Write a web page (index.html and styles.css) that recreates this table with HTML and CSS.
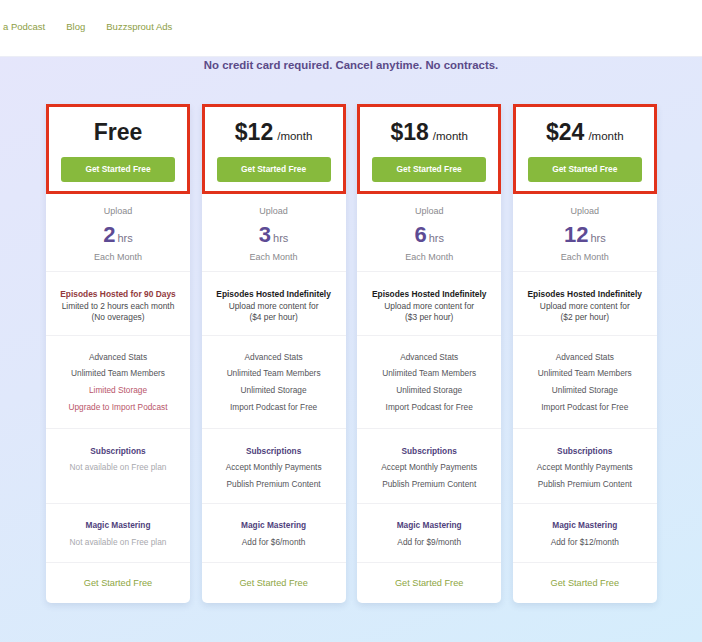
FILE: index.html
```html
<!DOCTYPE html>
<html>
<head>
<meta charset="utf-8">
<link rel="stylesheet" href="styles.css">
</head>
<body>
<header class="nav">
  <a class="nav-link">a Podcast</a>
  <a class="nav-link">Blog</a>
  <a class="nav-link">Buzzsprout Ads</a>
</header>
<main class="page">
  <p class="tagline">No credit card required. Cancel anytime. No contracts.</p>
  <div class="plans">
    <div class="card">
      <div class="top">
        <div class="price"><span class="amount">Free</span></div>
        <div class="btn">Get Started Free</div>
      </div>
      <div class="sec upload">
        <div class="label">Upload</div>
        <div class="hours"><span class="num">2</span><span class="unit">hrs</span></div>
        <div class="label each">Each Month</div>
      </div>
      <div class="sec episodes">
        <div class="ep-title warn">Episodes Hosted for 90 Days</div>
        <div class="ep-line">Limited to 2 hours each month</div>
        <div class="ep-line">(No overages)</div>
      </div>
      <div class="sec features">
        <div class="item">Advanced Stats</div>
        <div class="item">Unlimited Team Members</div>
        <div class="item limit">Limited Storage</div>
        <div class="item limit">Upgrade to Import Podcast</div>
      </div>
      <div class="sec subs">
        <div class="item title">Subscriptions</div>
        <div class="item muted">Not available on Free plan</div>
      </div>
      <div class="sec magic">
        <div class="item title">Magic Mastering</div>
        <div class="item muted">Not available on Free plan</div>
      </div>
      <div class="cta">Get Started Free</div>
    </div>

    <div class="card">
      <div class="top">
        <div class="price"><span class="amount">$12</span><span class="per">/month</span></div>
        <div class="btn">Get Started Free</div>
      </div>
      <div class="sec upload">
        <div class="label">Upload</div>
        <div class="hours"><span class="num">3</span><span class="unit">hrs</span></div>
        <div class="label each">Each Month</div>
      </div>
      <div class="sec episodes">
        <div class="ep-title">Episodes Hosted Indefinitely</div>
        <div class="ep-line">Upload more content for</div>
        <div class="ep-line">($4 per hour)</div>
      </div>
      <div class="sec features">
        <div class="item">Advanced Stats</div>
        <div class="item">Unlimited Team Members</div>
        <div class="item">Unlimited Storage</div>
        <div class="item">Import Podcast for Free</div>
      </div>
      <div class="sec subs">
        <div class="item title">Subscriptions</div>
        <div class="item">Accept Monthly Payments</div>
        <div class="item">Publish Premium Content</div>
      </div>
      <div class="sec magic">
        <div class="item title">Magic Mastering</div>
        <div class="item">Add for $6/month</div>
      </div>
      <div class="cta">Get Started Free</div>
    </div>

    <div class="card">
      <div class="top">
        <div class="price"><span class="amount">$18</span><span class="per">/month</span></div>
        <div class="btn">Get Started Free</div>
      </div>
      <div class="sec upload">
        <div class="label">Upload</div>
        <div class="hours"><span class="num">6</span><span class="unit">hrs</span></div>
        <div class="label each">Each Month</div>
      </div>
      <div class="sec episodes">
        <div class="ep-title">Episodes Hosted Indefinitely</div>
        <div class="ep-line">Upload more content for</div>
        <div class="ep-line">($3 per hour)</div>
      </div>
      <div class="sec features">
        <div class="item">Advanced Stats</div>
        <div class="item">Unlimited Team Members</div>
        <div class="item">Unlimited Storage</div>
        <div class="item">Import Podcast for Free</div>
      </div>
      <div class="sec subs">
        <div class="item title">Subscriptions</div>
        <div class="item">Accept Monthly Payments</div>
        <div class="item">Publish Premium Content</div>
      </div>
      <div class="sec magic">
        <div class="item title">Magic Mastering</div>
        <div class="item">Add for $9/month</div>
      </div>
      <div class="cta">Get Started Free</div>
    </div>

    <div class="card">
      <div class="top">
        <div class="price"><span class="amount">$24</span><span class="per">/month</span></div>
        <div class="btn">Get Started Free</div>
      </div>
      <div class="sec upload">
        <div class="label">Upload</div>
        <div class="hours"><span class="num">12</span><span class="unit">hrs</span></div>
        <div class="label each">Each Month</div>
      </div>
      <div class="sec episodes">
        <div class="ep-title">Episodes Hosted Indefinitely</div>
        <div class="ep-line">Upload more content for</div>
        <div class="ep-line">($2 per hour)</div>
      </div>
      <div class="sec features">
        <div class="item">Advanced Stats</div>
        <div class="item">Unlimited Team Members</div>
        <div class="item">Unlimited Storage</div>
        <div class="item">Import Podcast for Free</div>
      </div>
      <div class="sec subs">
        <div class="item title">Subscriptions</div>
        <div class="item">Accept Monthly Payments</div>
        <div class="item">Publish Premium Content</div>
      </div>
      <div class="sec magic">
        <div class="item title">Magic Mastering</div>
        <div class="item">Add for $12/month</div>
      </div>
      <div class="cta">Get Started Free</div>
    </div>
  </div>
</main>
</body>
</html>
```

FILE: styles.css
```css
* { box-sizing: border-box; }
html, body { margin: 0; padding: 0; }
body {
  font-family: "Liberation Sans", Arial, sans-serif;
  width: 702px;
  height: 642px;
  overflow: hidden;
  background: linear-gradient(160deg, #e6e6fb 0%, #e0e8fb 45%, #d5edfc 100%);
}
.nav {
  height: 57px;
  background: #fff;
  border-bottom: 1px solid #eceef6;
  display: flex;
  align-items: center;
  gap: 21px;
  padding-left: 3px;
  padding-bottom: 3px;
}
.nav-link {
  font-size: 9.5px;
  color: #8d9e45;
}
.page { padding-top: 0; }
.tagline {
  margin: 0;
  text-align: center;
  font-size: 11.4px;
  line-height: 16px;
  font-weight: bold;
  color: #5b4a88;
}
.plans {
  display: grid;
  grid-template-columns: repeat(4, 144px);
  gap: 11.6px;
  margin: 31px 0 0 46px;
}
.card {
  background: #fff;
  border-radius: 2px 2px 5px 5px;
  box-shadow: 0 3px 6px rgba(60, 80, 130, 0.12);
  text-align: center;
}
.top {
  height: 90px;
  border: 3px solid #e1321b;
  padding: 11px 12px 0;
}
.price {
  height: 28px;
  line-height: 28px;
  color: #1e1e1e;
}
.amount {
  font-size: 23px;
  font-weight: bold;
}
.per {
  font-size: 11.5px;
  margin-left: 4px;
}
.btn {
  margin: 11px 0 0;
  height: 25px;
  line-height: 25px;
  background: #87ba3d;
  border-radius: 3px;
  color: #fff;
  font-size: 8.4px;
  font-weight: bold;
}
.sec {
  border-bottom: 1px solid #f0f0f3;
}
.upload {
  height: 78px;
  padding-top: 9.5px;
}
.label {
  font-size: 9px;
  line-height: 14px;
  color: #8a8a8e;
}
.each { margin-top: 1px; }
.hours {
  margin-top: 3px;
  height: 28px;
  line-height: 28px;
}
.num {
  font-size: 22px;
  font-weight: bold;
  color: #5d4b94;
}
.unit {
  font-size: 11px;
  color: #77738a;
  margin-left: 2px;
}
.episodes {
  height: 64px;
  padding-top: 15.5px;
}
.ep-title {
  font-size: 8.4px;
  line-height: 12px;
  font-weight: bold;
  color: #1c1c1c;
}
.ep-title.warn { color: #923a3c; }
.ep-line {
  font-size: 8.4px;
  line-height: 10.7px;
  color: #4a4a4e;
}
.ep-title + .ep-line { margin-top: 1.8px; }
.item {
  font-size: 8.3px;
  line-height: 16.8px;
  color: #55555a;
}
.item.title {
  font-weight: bold;
  color: #4f3f7c;
}
.item.limit { color: #b9566a; }
.item.muted { color: #a9a9ae; }
.features {
  height: 93px;
  padding-top: 12.5px;
}
.subs {
  height: 75px;
  padding-top: 13.5px;
}
.magic {
  height: 59px;
  padding-top: 13px;
}
.cta {
  height: 40px;
  line-height: 40px;
  font-size: 9.2px;
  color: #8ea63f;
}
```
